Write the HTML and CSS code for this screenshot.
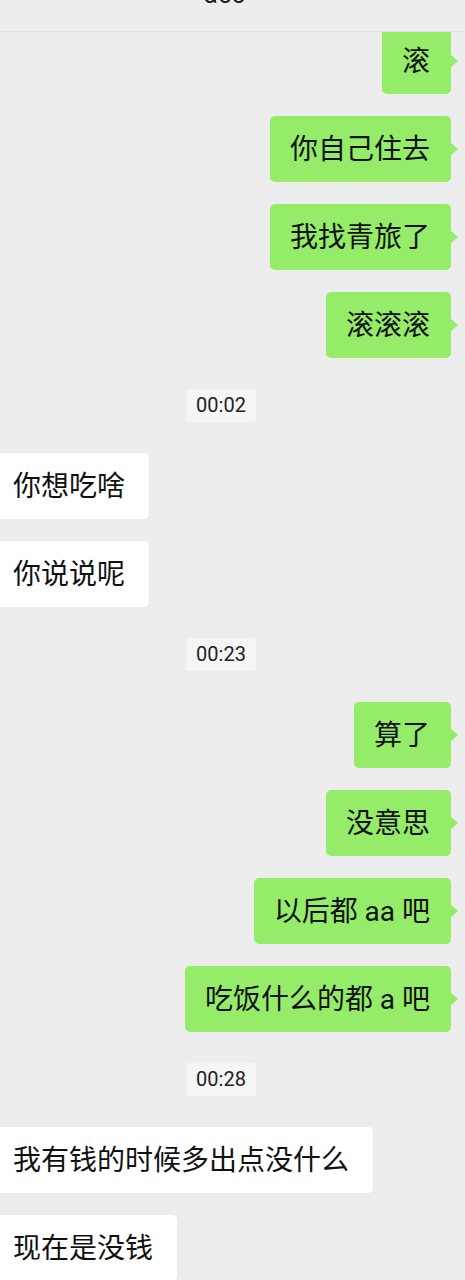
FILE: index.html
```html
<!DOCTYPE html>
<html lang="zh-CN">
<head>
    <meta charset="UTF-8" />
    <meta name="viewport" content="width=device-width, initial-scale=1.0" />
    <title>聊天</title>
    <link rel="stylesheet" href="styles.css">
</head>
<body>

<div id="header"><span class="title">acc</span></div>

<div id="messages">
    <div class="row mine"><div class="bubble">滚</div></div>
    <div class="row mine"><div class="bubble">你自己住去</div></div>
    <div class="row mine"><div class="bubble">我找青旅了</div></div>
    <div class="row mine"><div class="bubble">滚滚滚</div></div>

    <div class="timestamp"><span>00:02</span></div>

    <div class="row other"><div class="bubble">你想吃啥</div></div>
    <div class="row other"><div class="bubble">你说说呢</div></div>

    <div class="timestamp"><span>00:23</span></div>

    <div class="row mine"><div class="bubble">算了</div></div>
    <div class="row mine"><div class="bubble">没意思</div></div>
    <div class="row mine"><div class="bubble">以后都 aa 吧</div></div>
    <div class="row mine"><div class="bubble">吃饭什么的都 a 吧</div></div>

    <div class="timestamp"><span>00:28</span></div>

    <div class="row other"><div class="bubble">我有钱的时候多出点没什么</div></div>
    <div class="row other"><div class="bubble">现在是没钱</div></div>
</div>

</body>
</html>
```

FILE: styles.css
```css
* { box-sizing: border-box; }
body {
    margin: 0;
    font-family: Roboto, 'Noto Sans CJK SC', sans-serif;
    background-color: #ededed;
    color: #111;
    overflow: hidden;
}
#header {
    position: fixed;
    top: 0;
    left: 0;
    right: 0;
    height: 32px;
    background: #ededed;
    border-bottom: 1px solid #e3e3e3;
    text-align: center;
    z-index: 2;
}
#header .title {
    display: block;
    margin-top: -21px;
    margin-right: 16px;
    font-size: 26px;
    line-height: 30px;
    color: #222;
}
#messages {
    display: flex;
    flex-direction: column;
    gap: 22px;
    padding-top: 28px;
}
.row { display: flex; }
.row.mine {
    justify-content: flex-end;
    padding-right: 14px;
}
.row.other { margin-left: -7px; }
.bubble {
    position: relative;
    padding: 15px 21px 13px 20px;
    font-size: 28px;
    line-height: 38px;
    border-radius: 5px;
    background: #fff;
    white-space: nowrap;
}
.other .bubble { padding-right: 24px; }
.mine .bubble { background: #95ec69; }
.mine .bubble::after {
    content: "";
    position: absolute;
    right: -7px;
    top: 50%;
    margin-top: -7px;
    border-style: solid;
    border-width: 7px 0 7px 8px;
    border-color: transparent transparent transparent #95ec69;
}
.timestamp {
    display: flex;
    justify-content: center;
    margin: 9px 0;
    padding-right: 23px;
}
.timestamp span {
    background: #f5f5f5;
    color: #222;
    font-size: 20px;
    line-height: 25px;
    padding: 4px 10px;
    border-radius: 3px;
}
```
